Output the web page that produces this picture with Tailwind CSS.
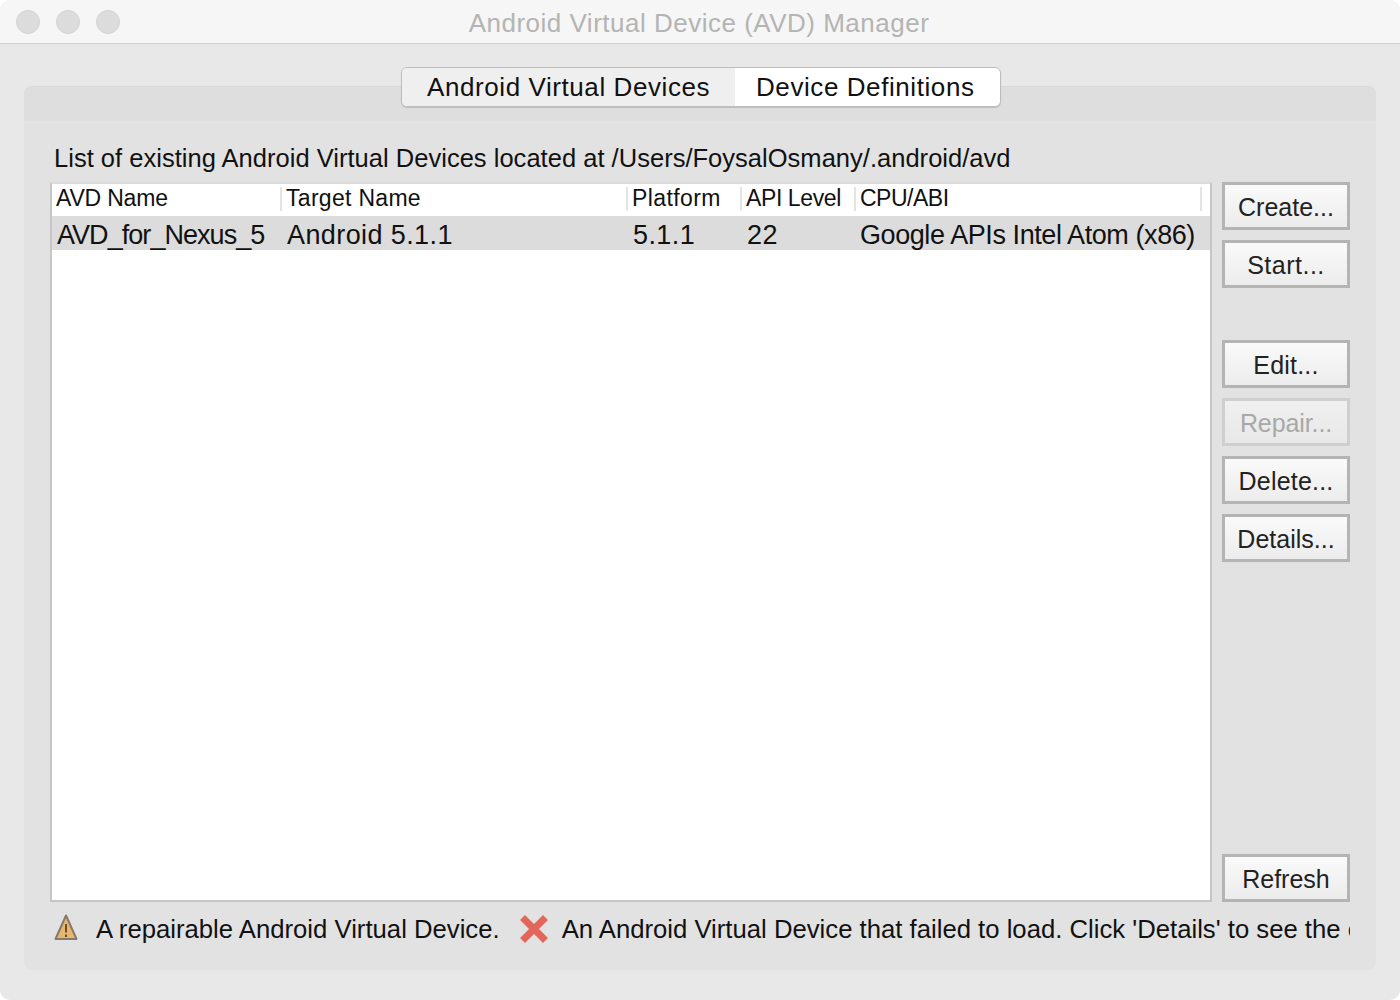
<!DOCTYPE html>
<html lang="en">
<head>
    <meta charset="UTF-8">
    <title>Android Virtual Device (AVD) Manager</title>
    <script src="https://cdn.jsdelivr.net/npm/@tailwindcss/browser@4"></script>
</head>
<body class="bg-white">
    <div class="w-[1400px] h-[1000px] overflow-hidden rounded-[10px] bg-[#e8e8e8] text-[#111] [font-family:'Liberation_Sans',sans-serif]">

        <!-- title bar -->
        <div class="h-[44px] flex items-center border-b border-[#d1d1d1] bg-[#f6f6f6] relative">
            <div class="flex gap-[16px] pl-[16px]">
                <div class="w-[24px] h-[24px] rounded-full bg-[#dcdcdc] border border-[#d3d3d3]"></div>
                <div class="w-[24px] h-[24px] rounded-full bg-[#dcdcdc] border border-[#d3d3d3]"></div>
                <div class="w-[24px] h-[24px] rounded-full bg-[#dcdcdc] border border-[#d3d3d3]"></div>
            </div>
            <div class="absolute left-0 top-0 w-full h-[44px] leading-[46px] text-center pr-[2px] text-[26px] tracking-[0.5px] text-[#b4b4b4]">Android Virtual Device (AVD) Manager</div>
        </div>

        <!-- panel -->
        <div class="mx-[24px] mt-[42px] h-[884px] rounded-[8px] bg-[#e2e2e2] border-t border-[#d8d8d8] relative">
            <div class="h-[34px] rounded-t-[8px] bg-[#dedede]"></div>

            <!-- tabs -->
            <div class="absolute left-[377px] top-[-20px] h-[40px] w-[600px] flex rounded-[6px] border border-[#bdbdbd] shadow-[0_1px_1px_rgba(0,0,0,0.15)] bg-white overflow-hidden text-[26px] leading-[38px] tracking-[0.58px]">
                <div class="w-[333px] bg-[#efefef] pl-[25px]">Android Virtual Devices</div>
                <div class="flex-1 pl-[21px]">Device Definitions</div>
            </div>

            <div class="pl-[30px] pt-[19px] h-[61px] text-[25.5px] leading-[36px] tracking-[0.02px] whitespace-nowrap">List of existing Android Virtual Devices located at /Users/FoysalOsmany/.android/avd</div>

            <div class="flex pl-[26px] gap-[10px]">
                <!-- table -->
                <div class="w-[1162px] h-[720px] bg-white border-2 border-[#c6c6c6] border-t-[#dcdcdc]">
                    <div class="h-[32px] grid grid-cols-[228px_346px_114px_114px_346px_1fr] text-[23px] leading-[22px] pt-[1px]">
                        <div class="pl-[4px] tracking-[-0.2px] mt-[2px]">AVD Name</div>
                        <div class="pl-[4px] border-l-2 border-[#e4e4e4] h-[24px] mt-[2px] tracking-[0.3px]">Target Name</div>
                        <div class="pl-[4px] border-l-2 border-[#e4e4e4] h-[24px] mt-[2px] tracking-[0.4px]">Platform</div>
                        <div class="pl-[4px] border-l-2 border-[#e4e4e4] h-[24px] mt-[2px] tracking-[-0.4px] whitespace-nowrap">API Level</div>
                        <div class="pl-[4px] border-l-2 border-[#e4e4e4] h-[24px] mt-[2px] tracking-[-0.5px]">CPU/ABI</div>
                        <div class="border-l-2 border-[#e4e4e4] h-[24px] mt-[2px]"></div>
                    </div>
                    <div class="h-[34px] bg-[#dcdcdc] grid grid-cols-[230px_346px_114px_114px_1fr] text-[27px] leading-[39px] whitespace-nowrap">
                        <div class="pl-[5px] tracking-[-0.95px]">AVD_for_Nexus_5</div>
                        <div class="pl-[5px] tracking-[0.4px]">Android 5.1.1</div>
                        <div class="pl-[5px] tracking-[0.4px]">5.1.1</div>
                        <div class="pl-[5px] tracking-[0.4px]">22</div>
                        <div class="pl-[4px] tracking-[-0.42px]">Google APIs Intel Atom (x86)</div>
                    </div>
                </div>

                <!-- buttons -->
                <div class="w-[128px] h-[720px] flex flex-col text-[25px] text-[#222]">
                    <button class="h-[48px] pt-[3px] border-[3px] border-[#b4b4b4] bg-gradient-to-b from-[#fafafa] to-[#ececec]">Create...</button>
                    <button class="h-[48px] pt-[3px] mt-[10px] tracking-[0.5px] border-[3px] border-[#b4b4b4] bg-gradient-to-b from-[#fafafa] to-[#ececec]">Start...</button>
                    <button class="h-[48px] pt-[3px] mt-[52px] tracking-[0.2px] border-[3px] border-[#b4b4b4] bg-gradient-to-b from-[#fafafa] to-[#ececec]">Edit...</button>
                    <button class="h-[48px] pt-[3px] mt-[10px] tracking-[-0.1px] border-[3px] border-[#cfcfcf] bg-gradient-to-b from-[#f0f0f0] to-[#e8e8e8] text-[#a8a8a8]">Repair...</button>
                    <button class="h-[48px] pt-[3px] mt-[10px] tracking-[0.2px] border-[3px] border-[#b4b4b4] bg-gradient-to-b from-[#fafafa] to-[#ececec]">Delete...</button>
                    <button class="h-[48px] pt-[3px] mt-[10px] border-[3px] border-[#b4b4b4] bg-gradient-to-b from-[#fafafa] to-[#ececec]">Details...</button>
                    <button class="h-[48px] pt-[3px] mt-auto border-[3px] border-[#b4b4b4] bg-gradient-to-b from-[#fafafa] to-[#ececec]">Refresh</button>
                </div>
            </div>

            <!-- legend -->
            <div class="w-[1296px] ml-[30px] h-[56px] pb-[2px] flex items-center overflow-hidden whitespace-nowrap text-[25.7px]">
                <svg class="shrink-0 mb-[2px]" width="24" height="28" viewBox="0 0 24 28">
                    <path d="M12 1.5 L22.5 25 H1.5 Z" fill="#e9b66f" stroke="#85796a" stroke-width="2" stroke-linejoin="round"/>
                    <path d="M12 10 V18.5 M12 20.5 V23" stroke="#6b4f2a" stroke-width="2"/>
                </svg>
                <span class="ml-[18px]">A repairable Android Virtual Device.</span>
                <svg class="shrink-0 ml-[19px]" width="30" height="30" viewBox="0 0 30 30">
                    <path d="M6 6 L24 24 M24 6 L6 24" stroke="#e2665a" stroke-width="7" stroke-linecap="square"/>
                </svg>
                <span class="ml-[13px]">An Android Virtual Device that failed to load. Click 'Details' to see the error.</span>
            </div>
        </div>
    </div>
</body>
</html>
